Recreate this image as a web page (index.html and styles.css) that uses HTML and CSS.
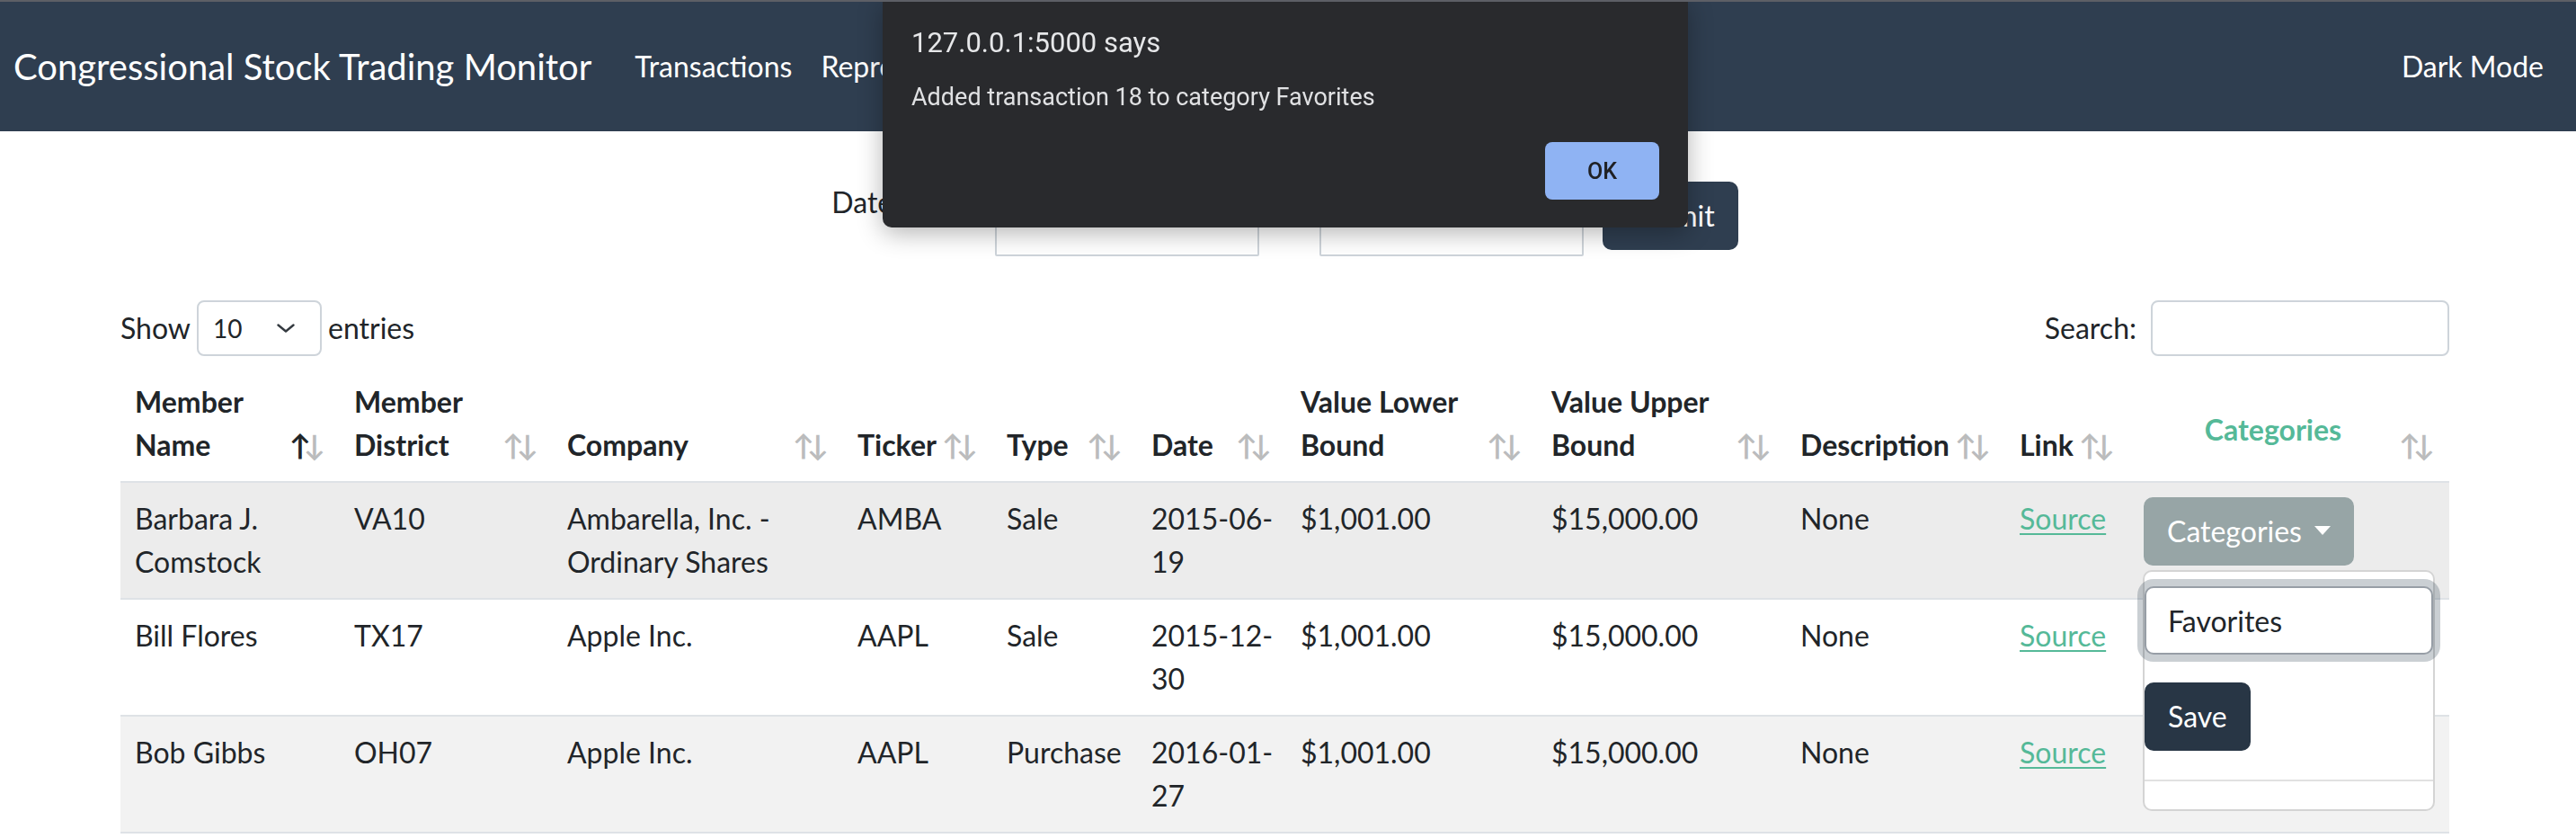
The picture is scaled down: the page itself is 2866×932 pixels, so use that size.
FILE: index.html
```html
<!DOCTYPE html>
<html lang="en">
<head>
<meta charset="utf-8">
<title>Congressional Stock Trading Monitor</title>
<link rel="stylesheet" href="styles.css">
</head>
<body>
<div class="topstrip"></div>
<nav class="navbar">
  <a class="brand" href="#">Congressional Stock Trading Monitor</a>
  <ul class="nav-links">
    <li><a href="#">Transactions</a></li>
    <li><a href="#">Representatives</a></li>
  </ul>
  <a class="nav-right" href="#">Dark Mode</a>
</nav>

<main class="container">
  <form class="date-form">
    <label class="date-label">Date Range:</label>
    <input class="date-input" type="text">
    <span class="date-sep">to</span>
    <input class="date-input" type="text">
    <button class="btn btn-primary submit" type="button">Submit</button>
  </form>

  <div class="dt-top">
    <div class="dt-length">Show
      <span class="select-sm"><span>10</span>
        <svg class="chev" width="20" height="10" viewBox="0 0 20 10"><path d="M1.5 1.5 L10 8.5 L18.5 1.5" fill="none" stroke="#343a40" stroke-width="2.4" stroke-linecap="round" stroke-linejoin="round"/></svg>
      </span>entries</div>
    <div class="dt-filter">Search:<span class="search-input"></span></div>
  </div>

  <table class="dt">
    <colgroup>
      <col class="w1"><col class="w2"><col class="w3"><col class="w4"><col class="w5"><col class="w6"><col class="w7"><col class="w8"><col class="w9"><col class="w10"><col class="w11">
    </colgroup>
    <thead>
      <tr>
        <th class="sort asc">Member Name</th>
        <th class="sort">Member District</th>
        <th class="sort">Company</th>
        <th class="sort">Ticker</th>
        <th class="sort">Type</th>
        <th class="sort">Date</th>
        <th class="sort">Value Lower Bound</th>
        <th class="sort">Value Upper Bound</th>
        <th class="sort">Description</th>
        <th class="sort">Link</th>
        <th class="sort cat-head">Categories</th>
      </tr>
    </thead>
    <tbody>
      <tr class="row-hover">
        <td>Barbara J. Comstock</td>
        <td>VA10</td>
        <td>Ambarella, Inc. - Ordinary Shares</td>
        <td>AMBA</td>
        <td>Sale</td>
        <td>2015-06-19</td>
        <td>$1,001.00</td>
        <td>$15,000.00</td>
        <td>None</td>
        <td><a class="src" href="#">Source</a></td>
        <td>
          <div class="dropdown">
            <button class="btn btn-secondary dropdown-toggle" type="button">Categories</button>
            <div class="dropdown-menu">
              <input class="menu-input" type="text" value="Favorites">
              <button class="btn btn-save" type="button">Save</button>
              <hr class="dropdown-divider">
            </div>
          </div>
        </td>
      </tr>
      <tr>
        <td>Bill Flores</td>
        <td>TX17</td>
        <td>Apple Inc.</td>
        <td>AAPL</td>
        <td>Sale</td>
        <td>2015-12-30</td>
        <td>$1,001.00</td>
        <td>$15,000.00</td>
        <td>None</td>
        <td><a class="src" href="#">Source</a></td>
        <td><button class="btn btn-secondary dropdown-toggle" type="button">Categories</button></td>
      </tr>
      <tr class="row-striped">
        <td>Bob Gibbs</td>
        <td>OH07</td>
        <td>Apple Inc.</td>
        <td>AAPL</td>
        <td>Purchase</td>
        <td>2016-01-27</td>
        <td>$1,001.00</td>
        <td>$15,000.00</td>
        <td>None</td>
        <td><a class="src" href="#">Source</a></td>
        <td><button class="btn btn-secondary dropdown-toggle" type="button">Categories</button></td>
      </tr>
    </tbody>
  </table>
</main>

<div class="alert-dialog" role="alertdialog">
  <div class="alert-title">127.0.0.1:5000 says</div>
  <div class="alert-msg">Added transaction 18 to category Favorites</div>
  <div class="alert-actions"><button class="alert-ok" type="button">OK</button></div>
</div>
</body>
</html>
```

FILE: styles.css
```css
* { box-sizing: border-box; }

html, body {
  margin: 0;
  padding: 0;
}

body {
  width: 2866px;
  height: 932px;
  overflow: hidden;
  background: #ffffff;
  color: #212529;
  font-family: Lato, "Noto Sans", sans-serif;
  font-size: 32px;
  line-height: 48px;
}

.topstrip {
  position: fixed;
  top: 0;
  left: 0;
  right: 0;
  height: 2px;
  background: #5d5f66;
  z-index: 20;
}

/* ---------- navbar ---------- */
.navbar {
  display: flex;
  align-items: center;
  height: 146px;
  padding: 2px 20px 0 15px;
  background: #2f3e50;
}

.brand {
  margin-right: 32px;
  padding: 10px 0;
  color: #ffffff;
  font-size: 40px;
  line-height: 60px;
  text-decoration: none;
  white-space: nowrap;
}

.nav-links {
  display: flex;
  flex: 1;
  margin: 0;
  padding: 0;
  list-style: none;
}

.nav-links a,
.nav-right {
  display: block;
  padding: 16px;
  color: #ffffff;
  text-decoration: none;
  white-space: nowrap;
}

/* ---------- container ---------- */
.container {
  width: 2591px;
  margin-left: 134px;
}

/* ---------- date filter ---------- */
.date-form {
  display: flex;
  justify-content: center;
  align-items: flex-start;
  height: 84px;
  margin: 55px 0 0;
}

.date-label {
  width: 182px;
  white-space: nowrap;
}

.date-input {
  width: 294px;
  height: 76px;
  margin: 8px 0 0;
  padding: 12px 24px;
  border: 2px solid #ced4da;
  border-radius: 2px;
  background: #ffffff;
  font: inherit;
}

.date-sep {
  width: 67px;
  margin-top: -4px;
  text-align: center;
}

/* ---------- buttons ---------- */
.btn {
  display: inline-block;
  padding: 12px 24px;
  border: 2px solid transparent;
  border-radius: 10px;
  color: #ffffff;
  font-family: Lato, "Noto Sans", sans-serif;
  font-size: 32px;
  line-height: 48px;
  white-space: nowrap;
  cursor: pointer;
}

.btn-primary {
  background: #2f3e50;
  border-color: #2f3e50;
}

.submit {
  margin: 1px 0 0 21px;
}

.btn-secondary {
  background: #97a5a6;
  border-color: #97a5a6;
}

.dropdown-toggle::after {
  content: "";
  display: inline-block;
  margin-left: 14px;
  vertical-align: 8px;
  border-top: 10px solid #ffffff;
  border-left: 9px solid transparent;
  border-right: 9px solid transparent;
}

.btn-save {
  display: block;
  margin-top: 31px;
  background: #283645;
  border-color: #283645;
}

/* ---------- datatable top controls ---------- */
.dt-top {
  display: flex;
  justify-content: space-between;
  align-items: center;
  height: 62px;
  margin-top: 49px;
}

.dt-length,
.dt-filter {
  display: flex;
  align-items: center;
  white-space: nowrap;
}

.select-sm {
  display: flex;
  align-items: center;
  justify-content: space-between;
  width: 139px;
  height: 62px;
  margin: 0 7px;
  padding: 0 28px 0 16px;
  border: 2px solid #ced4da;
  border-radius: 8px;
  font-size: 28px;
  line-height: 42px;
}

.chev {
  display: block;
}

.search-input {
  display: block;
  width: 332px;
  height: 62px;
  margin-left: 16px;
  border: 2px solid #ced4da;
  border-radius: 8px;
}

/* ---------- table ---------- */
.dt {
  width: 2591px;
  margin-top: 11px;
  border-collapse: collapse;
  table-layout: fixed;
}

.w1 { width: 244px; }
.w2 { width: 237px; }
.w3 { width: 323px; }
.w4 { width: 166px; }
.w5 { width: 161px; }
.w6 { width: 166px; }
.w7 { width: 279px; }
.w8 { width: 277px; }
.w9 { width: 244px; }
.w10 { width: 138px; }
.w11 { width: 356px; }

.dt th,
.dt td {
  padding: 16px 12px 16px 16px;
  border-bottom: 2px solid #dee2e6;
  text-align: left;
}

.dt th {
  position: relative;
  padding-right: 52px;
  font-weight: 700;
  vertical-align: bottom;
}

.dt td {
  vertical-align: top;
}

.dt th.sort::before,
.dt th.sort::after {
  position: absolute;
  bottom: 16px;
  display: block;
  color: #212529;
  font-weight: 700;
  opacity: 0.3;
}

.dt th.sort::before {
  right: 32px;
  content: "\2191";
}

.dt th.sort::after {
  right: 16px;
  content: "\2193";
}

.dt th.asc::before {
  opacity: 1;
}

.dt th.cat-head {
  padding-top: 30px;
  color: #55b998;
  text-align: center;
  vertical-align: middle;
}

.row-hover td {
  background: #ececec;
}

.row-striped td {
  background: #f2f2f2;
}

.src {
  color: #55b998;
  text-decoration: underline;
  text-decoration-thickness: 2px;
  text-underline-offset: 4px;
}

/* ---------- dropdown ---------- */
.dropdown {
  position: relative;
  display: inline-block;
}

.dropdown-menu {
  position: absolute;
  top: 81px;
  left: -1px;
  z-index: 5;
  width: 325px;
  padding-top: 16px;
  background: #ffffff;
  border: 2px solid #d4d4d4;
  border-radius: 10px;
}

.menu-input {
  display: block;
  width: 100%;
  height: 76px;
  padding: 12px 24px;
  border: 2px solid #979ea6;
  border-radius: 10px;
  outline: none;
  box-shadow: 0 0 0 8px rgba(44, 62, 80, 0.25);
  color: #212529;
  font: inherit;
}

.dropdown-divider {
  height: 0;
  margin: 32px 0 31px;
  border: 0;
  border-top: 2px solid #e1e1e1;
}

/* ---------- alert dialog ---------- */
.alert-dialog {
  position: fixed;
  top: 0;
  left: 982px;
  z-index: 10;
  display: flex;
  flex-direction: column;
  width: 896px;
  height: 253px;
  padding: 29px 32px 31px;
  background: #292a2d;
  border-radius: 0 0 10px 10px;
  box-shadow: 0 6px 28px rgba(0, 0, 0, 0.3);
  font-family: Roboto, "Liberation Sans", sans-serif;
}

.alert-title {
  color: #e6e7e9;
  font-size: 31px;
  line-height: 37px;
}

.alert-msg {
  margin-top: 26px;
  color: #e0e1e3;
  font-size: 27px;
  line-height: 32px;
}

.alert-actions {
  display: flex;
  justify-content: flex-end;
  margin-top: auto;
}

.alert-ok {
  width: 127px;
  height: 64px;
  border: 0;
  border-radius: 8px;
  background: #8fb3f3;
  color: #202124;
  font-family: Roboto, "Liberation Sans", sans-serif;
  font-size: 25px;
  font-weight: 500;
}
```
